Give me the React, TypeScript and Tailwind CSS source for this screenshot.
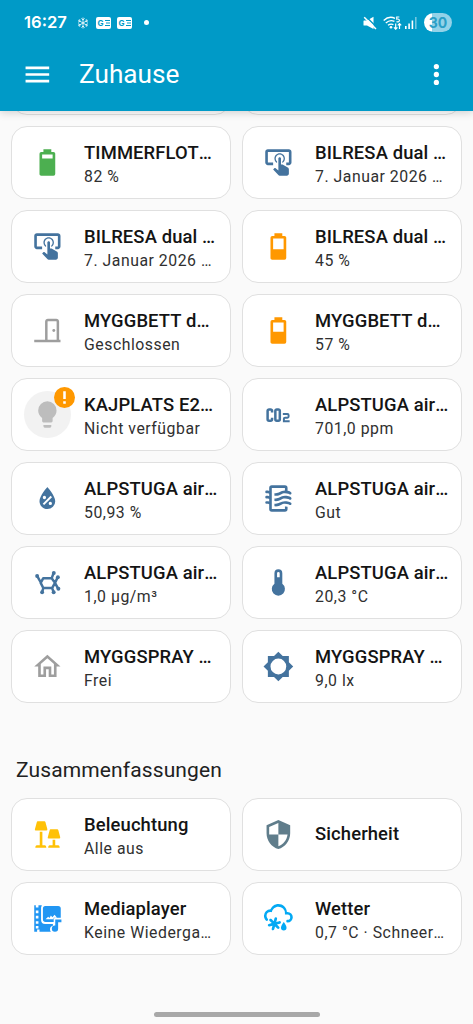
import type { ReactNode } from "react";

type Kachel = { titel: string; status?: string; icon: ReactNode; farbe: string; fehler?: boolean };

const BLAU = "text-[#44739e]";
const ORANGE = "text-[#ff9800]";
const GRAU = "text-[#9e9e9e]";

// 24er-Raster mit Rand, damit das Icon genau die runde Fläche füllt
function Icon({ d, children }: { d?: string; children?: ReactNode }) {
  return (
    <svg viewBox="-5.8 -5.9 35.8 35.8" className="w-[47px] h-[47px] shrink-0" fill="currentColor">
      {d && <path d={d} fillRule="evenodd" />}
      {children}
    </svg>
  );
}

const AKKU = "M16.67,4H15V2H9V4H7.33A1.33,1.33 0 0,0 6,5.33V20.67C6,21.4 6.6,22 7.33,22H16.67A1.33,1.33 0 0,0 18,20.67V5.33C18,4.6 17.4,4 16.67,4Z";
const akku80 = <Icon d={"M16,9H8V6H16Z" + AKKU} />;
const akku50 = <Icon d={"M16,13H8V6H16Z" + AKKU} />;
const akku40 = <Icon d={"M16,14H8V6H16Z" + AKKU} />;

const taste = (
  <Icon d="M13 5C15.21 5 17 6.79 17 9C17 10.5 16.2 11.77 15 12.46V11.24C15.61 10.69 16 9.89 16 9C16 7.34 14.66 6 13 6S10 7.34 10 9C10 9.89 10.39 10.69 11 11.24V12.46C9.8 11.77 9 10.5 9 9C9 6.79 10.79 5 13 5M20 20.5C19.97 21.32 19.32 21.97 18.5 22H13C12.62 22 12.26 21.85 12 21.57L8 17.37L8.74 16.6C8.93 16.39 9.2 16.28 9.5 16.28H9.7L12 18V9C12 8.45 12.45 8 13 8S14 8.45 14 9V13.47L15.21 13.6L19.15 15.79C19.68 16.03 20 16.56 20 17.14V20.5M20 2H4C2.9 2 2 2.9 2 4V12C2 13.11 2.9 14 4 14H8V12L4 12L4 4H20L20 12H18V14H20V13.97L20.04 14C21.13 14 22 13.09 22 12V4C22 2.9 21.11 2 20 2Z" />
);

const tuer = (
  <Icon>
    <path d="M2 20H22M11.2 20V5.2A1.2 1.2 0 0 1 12.4 4H18.8A1.2 1.2 0 0 1 20 5.2V20" fill="none" stroke="currentColor" strokeWidth="1.9" />
    <circle cx="16.9" cy="12" r="1.1" />
  </Icon>
);

const birne = (
  <Icon d="M12,2A7,7 0 0,0 5,9C5,11.38 6.19,13.47 8,14.74V17A1,1 0 0,0 9,18H15A1,1 0 0,0 16,17V14.74C17.81,13.47 19,11.38 19,9A7,7 0 0,0 12,2M9,21A1,1 0 0,0 10,22H14A1,1 0 0,0 15,21V20H9V21Z" />
);

const co2 = (
  <Icon>
    <path
      d="M7.2 10.4V9.2A1.1 1.1 0 0 0 6.1 8.1H4.9A1.1 1.1 0 0 0 3.8 9.2V15.6A1.1 1.1 0 0 0 4.9 16.7H6.1A1.1 1.1 0 0 0 7.2 15.6V14.4M10.8 8.1H12A1.1 1.1 0 0 1 13.1 9.2V15.6A1.1 1.1 0 0 1 12 16.7H10.8A1.1 1.1 0 0 1 9.7 15.6V9.2A1.1 1.1 0 0 1 10.8 8.1Z"
      fill="none"
      stroke="currentColor"
      strokeWidth="1.9"
    />
    <path d="M15.4 11.7H18.9A.9 .9 0 0 1 19.8 12.6V13.5A.9 .9 0 0 1 18.9 14.4H17.1A.9 .9 0 0 0 16.2 15.3V17.2H20.6" fill="none" stroke="currentColor" strokeWidth="1.5" />
  </Icon>
);

const feuchte = (
  <Icon d="M12,3.25C12,3.25 6,10 6,14C6,17.32 8.69,20 12,20A6,6 0 0,0 18,14C18,10 12,3.25 12,3.25M14.47,9.97L15.53,11.03L9.53,17.03L8.47,15.97M9.75,10A1.25,1.25 0 0,1 11,11.25A1.25,1.25 0 0,1 9.75,12.5A1.25,1.25 0 0,1 8.5,11.25A1.25,1.25 0 0,1 9.75,10M14.25,14.5A1.25,1.25 0 0,1 15.5,15.75A1.25,1.25 0 0,1 14.25,17A1.25,1.25 0 0,1 13,15.75A1.25,1.25 0 0,1 14.25,14.5Z" />
);

const luft = (
  <Icon d="M19,18.31V20A2,2 0 0,1 17,22H7A2,2 0 0,1 5,20V16.3C4.54,16.12 3.95,16 3,16A1,1 0 0,1 2,15A1,1 0 0,1 3,14C3.82,14 4.47,14.08 5,14.21V12.3C4.54,12.12 3.95,12 3,12A1,1 0 0,1 2,11A1,1 0 0,1 3,10C3.82,10 4.47,10.08 5,10.21V8.3C4.54,8.12 3.95,8 3,8A1,1 0 0,1 2,7A1,1 0 0,1 3,6C3.82,6 4.47,6.08 5,6.21V4A2,2 0 0,1 7,2H17A2,2 0 0,1 19,4V6.16C20.78,6.47 21.54,7.13 21.71,7.29C22.1,7.68 22.1,8.32 21.71,8.71C21.32,9.1 20.8,9.09 20.29,8.71V8.71C20.29,8.71 19.25,8 17,8C15.74,8 14.91,8.41 13.95,8.9C12.91,9.41 11.74,10 10,10C9.64,10 9.31,10 9,9.96V7.95C9.3,8 9.63,8 10,8C11.26,8 12.09,7.59 13.05,7.11C14.09,6.59 15.27,6 17,6V4H7V20H17V18C18.5,18 18.97,18.29 19,18.31M17,10C15.27,10 14.09,10.59 13.05,11.11C12.09,11.59 11.26,12 10,12C9.63,12 9.3,12 9,11.95V13.96C9.31,14 9.64,14 10,14C11.74,14 12.91,13.41 13.95,12.9C14.91,12.42 15.74,12 17,12C19.25,12 20.29,12.71 20.29,12.71V12.71C20.8,13.1 21.32,13.1 21.71,12.71C22.1,12.32 22.1,11.69 21.71,11.29C21.5,11.08 20.25,10 17,10M17,14C15.27,14 14.09,14.59 13.05,15.11C12.09,15.59 11.26,16 10,16C9.63,16 9.3,16 9,15.95V17.96C9.31,18 9.64,18 10,18C11.74,18 12.91,17.41 13.95,16.9C14.91,16.42 15.74,16 17,16C19.25,16 20.29,16.71 20.29,16.71V16.71C20.8,17.1 21.32,17.1 21.71,16.71C22.1,16.32 22.1,15.69 21.71,15.29C21.5,15.08 20.25,14 17,14Z" />
);

const feinstaub = (
  <Icon>
    <path d="M8.9 8.7H15.3L17.8 12.3L15.6 16.2H8.9L6.9 12.3ZM4.4 7.3L7 12M15.3 8.7L16.8 4.8M17.8 12.3L19.8 8.2M17.8 12.3L20.2 16.6M15.6 16.2L16.8 19.3M8.9 16.2L8 19.3" fill="none" stroke="currentColor" strokeWidth="1.9" strokeLinejoin="round" />
    <circle cx="4.2" cy="7.1" r="1.5" />
    <circle cx="16.9" cy="4.7" r="1.5" />
    <circle cx="20" cy="8" r="1.5" />
    <circle cx="20.4" cy="16.8" r="1.5" />
    <circle cx="16.8" cy="19.4" r="1.5" />
    <circle cx="8" cy="19.4" r="1.5" />
  </Icon>
);

const thermometer = <Icon d="M15 13V5A3 3 0 0 0 9 5V13A5 5 0 1 0 15 13M12 4A1 1 0 0 1 13 5V8H11V5A1 1 0 0 1 12 4Z" />;
const haus = <Icon d="M12 5.69L17 10.19V18H15V12H9V18H7V10.19L12 5.69M12 3L2 12H5V20H11V14H13V20H19V12H22" />;
const helligkeit = (
  <Icon d="M12,18A6,6 0 0,1 6,12A6,6 0 0,1 12,6A6,6 0 0,1 18,12A6,6 0 0,1 12,18M20,15.31L23.31,12L20,8.69V4H15.31L12,0.69L8.69,4H4V8.69L0.69,12L4,15.31V20H8.69L12,23.31L15.31,20H20V15.31Z" />
);

const lampen = (
  <Icon>
    <path d="M4.6 2H9.8Q10.3 2 10.5 2.5L12 8Q12.1 9 11.2 9H3.2Q2.2 9 2.5 8L4 2.5Q4.1 2 4.6 2ZM14.4 8H19.6Q20.1 8 20.3 8.5L21.8 14Q21.9 15 21 15H13Q12 15 12.3 14L13.8 8.5Q13.9 8 14.4 8Z" />
    <path d="M6.2 10H8.2V20.2H10.2Q11.2 20.3 11.2 22H2.8Q2.8 20.3 3.8 20.2H6.2ZM16 16H18V20.2H20.4Q21.4 20.3 21.4 22H12.6Q12.6 20.3 13.6 20.2H16Z" />
  </Icon>
);

const schild = <Icon d="M12,12H19C18.47,16.11 15.72,19.78 12,20.92V12H5V6.3L12,3.19M12,1L3,5V11C3,16.55 6.84,21.73 12,23C17.16,21.73 21,16.55 21,11V5L12,1Z" />;

// Filmstreifen, Bild und Note
const medien = (
  <Icon>
    <path
      fillRule="evenodd"
      d="M2 2H3.2V3.6H5.2V2H7.8L7.2 3.6V13Q7.2 16.2 10.3 16.2H16.2V17.6Q14 18.3 14 20.3Q14 21.4 14.7 22H6V20.4H4.2V22H2ZM3.2 6V8H5.2V6ZM3.2 10V12H5.2V10ZM3.2 14V16H5.2V14ZM3.2 17.8V19.6H5.2V17.8Z"
    />
    <path d="M10.4 2.4H20.2Q22.2 2.4 22.2 4.4V11.4H16.8V14.6H10.6Q8.6 14.6 8.6 12.6V4.4Q8.6 2.4 10.4 2.4ZM10.6 12.6H16.5V12L19.2 11.3L17.5 9.2L15.8 11L14.7 9.8L13.6 11.6L12.6 10.6Z" fillRule="evenodd" />
    <path d="M18 12.8H22.7V14.8H20.2V19.6A2.4 2.4 0 1 1 18 17.3Z" />
  </Icon>
);

const wetter = (
  <Icon>
    <path d="M4,16.36C3.86,15.82 4.18,15.25 4.73,15.11L7,14.5L5.33,12.86C4.93,12.46 4.93,11.81 5.33,11.4C5.73,11 6.4,11 6.79,11.4L8.45,13.05L9.04,10.8C9.18,10.24 9.75,9.92 10.29,10.07C10.85,10.21 11.17,10.78 11,11.33L10.42,13.58L12.67,13C13.22,12.83 13.79,13.15 13.93,13.71C14.08,14.25 13.76,14.82 13.2,14.96L10.95,15.55L12.6,17.21C13,17.6 13,18.27 12.6,18.67C12.2,19.07 11.54,19.07 11.15,18.67L9.5,17L8.89,19.27C8.75,19.83 8.18,20.14 7.64,20C7.08,19.86 6.77,19.29 6.91,18.74L7.5,16.5L5.26,17.09C4.71,17.23 4.14,16.92 4,16.36Z" transform="translate(0 1)" />
    <path d="M1,10A5,5 0 0,1 6,5C7,2.65 9.3,1 12,1C15.43,1 18.24,3.66 18.5,7.03L19,7A4,4 0 0,1 23,11A4,4 0 0,1 19,15A1,1 0 0,1 18,14A1,1 0 0,1 19,13A2,2 0 0,0 21,11A2,2 0 0,0 19,9H17V8A5,5 0 0,0 12,3C9.5,3 7.45,4.82 7.06,7.19C6.73,7.07 6.37,7 6,7A3,3 0 0,0 3,10C3,10.85 3.35,11.61 3.91,12.16C4.27,12.55 4.26,13.16 3.88,13.54C3.5,13.93 2.85,13.93 2.47,13.54C1.56,12.63 1,11.38 1,10Z" />
    <path d="M16.1 14.7C16.1 14.7 18.2 17.3 18.2 19A2.1 2.1 0 0 1 14 19C14 17.3 16.1 14.7 16.1 14.7Z" />
  </Icon>
);

const GERAETE: Kachel[] = [
  { titel: "TIMMERFLOT…", status: "82 %", icon: akku80, farbe: "text-[#4caf50]" },
  { titel: "BILRESA dual …", status: "7. Januar 2026 …", icon: taste, farbe: BLAU },
  { titel: "BILRESA dual …", status: "7. Januar 2026 …", icon: taste, farbe: BLAU },
  { titel: "BILRESA dual …", status: "45 %", icon: akku40, farbe: ORANGE },
  { titel: "MYGGBETT d…", status: "Geschlossen", icon: tuer, farbe: GRAU },
  { titel: "MYGGBETT d…", status: "57 %", icon: akku50, farbe: ORANGE },
  { titel: "KAJPLATS E2…", status: "Nicht verfügbar", icon: birne, farbe: "text-[#bdbdbd]", fehler: true },
  { titel: "ALPSTUGA air…", status: "701,0 ppm", icon: co2, farbe: BLAU },
  { titel: "ALPSTUGA air…", status: "50,93 %", icon: feuchte, farbe: BLAU },
  { titel: "ALPSTUGA air…", status: "Gut", icon: luft, farbe: BLAU },
  { titel: "ALPSTUGA air…", status: "1,0 μg/m³", icon: feinstaub, farbe: BLAU },
  { titel: "ALPSTUGA air…", status: "20,3 °C", icon: thermometer, farbe: BLAU },
  { titel: "MYGGSPRAY …", status: "Frei", icon: haus, farbe: GRAU },
  { titel: "MYGGSPRAY …", status: "9,0 lx", icon: helligkeit, farbe: BLAU },
];

const ZUSAMMENFASSUNGEN: Kachel[] = [
  { titel: "Beleuchtung", status: "Alle aus", icon: lampen, farbe: "text-[#ffc107]" },
  { titel: "Sicherheit", icon: schild, farbe: "text-[#607d8b]" },
  { titel: "Mediaplayer", status: "Keine Wiederga…", icon: medien, farbe: "text-[#2196f3]" },
  { titel: "Wetter", status: "0,7 °C · Schneer…", icon: wetter, farbe: "text-[#03a9f4]" },
];

// Auslassungspunkte ohne Kerning zum letzten Buchstaben
function Text({ t }: { t: string }) {
  if (!t.endsWith("…")) return <>{t}</>;
  return <>{t.slice(0, -1)}<span className="inline-block">…</span></>;
}

function Karte({ k }: { k: Kachel }) {
  return (
    <div className="h-[73px] min-w-0 flex items-center gap-[13px] pl-[12px] pr-[8px] bg-white border border-[#e0e0e0] rounded-[16px]">
      <div className={`relative w-[47px] h-[47px] shrink-0 rounded-full ${k.farbe} ${k.fehler ? "bg-[#f2f2f2]" : ""}`}>
        {k.icon}
        {k.fehler && (
          <span className="absolute -top-[4px] -right-[4px] w-[21px] h-[21px] rounded-full bg-[#ff9800] flex items-center justify-center">
            <svg viewBox="0 0 24 24" className="w-[17px] h-[17px]" fill="#fff">
              <path d="M10.2 3H13.8V14H10.2ZM10.2 17.2H13.8V20.8H10.2Z" />
            </svg>
          </span>
        )}
      </div>
      <div className={`min-w-0 flex-1 whitespace-nowrap ${k.status ? "pt-[2px]" : "pb-[1px]"}`}>
        <div className="h-[26px] text-[18.4px] leading-[26px] font-medium tracking-[0.13px] text-[#141414]"><Text t={k.titel} /></div>
        {k.status && <div className="h-[21px] text-[15.8px] leading-[21px] tracking-[0.53px] text-[#303030]"><Text t={k.status} /></div>}
      </div>
    </div>
  );
}

function Statusleiste() {
  return (
    <div className="h-[38px] pt-[7px] pl-[24px] pr-[21px] flex items-center text-white">
      <span className="w-[53px] text-[16.6px] font-semibold font-['Inter',sans-serif]">16:27</span>
      <svg viewBox="0 0 12 12" className="w-[12px] h-[12px]" fill="none" stroke="currentColor" strokeWidth="0.8">
        <path d="M6 0.5V11.5M1.2 3.2L10.8 8.8M10.8 3.2L1.2 8.8M4.4 1.4L6 3L7.6 1.4M4.4 10.6L6 9L7.6 10.6M1 5.2L3 4.4L2.7 2.2M11 5.2L9 4.4L9.3 2.2M1 6.8L3 7.6L2.7 9.8M11 6.8L9 7.6L9.3 9.8" />
      </svg>
      {[0, 1].map((i) => (
        <span key={i} className={`${i ? "ml-[6px]" : "ml-[7px]"} w-[15px] h-[12px] rounded-[2px] bg-white flex items-center justify-center gap-[1px]`}>
          <span className="text-[8px] leading-none font-bold text-[#009ac7] font-['Inter',sans-serif]">G</span>
          <svg viewBox="0 0 5 6" className="w-[5px] h-[6px]" stroke="#009ac7" strokeWidth="1">
            <path d="M0 .5H5M1 3H5M0 5.5H5" />
          </svg>
        </span>
      ))}
      <span className="ml-[12px] w-[5px] h-[5px] rounded-full bg-white" />
      <div className="flex-1" />
      <svg viewBox="0 0 14 14" className="w-[14px] h-[14px]" fill="currentColor">
        <path d="M1 4.5H4L10.5 0.8V13L4 9.5H1Q.5 9.5 .5 9V5Q.5 4.5 1 4.5Z" />
        <path d="M2.4 0L14 11.6" stroke="#009ac7" strokeWidth="1.4" />
        <path d="M1.2 1.2L13 13" stroke="currentColor" strokeWidth="1.5" />
      </svg>
      <svg viewBox="0 0 19 14" className="ml-[6px] w-[19px] h-[14px]" fill="none" stroke="currentColor" strokeWidth="1.4">
        <path d="M.7 4.5Q6 -.5 12 2.4M2.8 7Q7 3.2 11.4 5.4M5 9.3Q7.6 7.4 10.4 8.6" />
        <circle cx="8" cy="11.3" r="1.3" fill="currentColor" stroke="none" />
        <path d="M16.3 1H13.7V3.1Q16.4 2.7 16.4 4.4Q16.3 6.3 13.4 5.8" strokeWidth="1.1" />
        <path d="M12.7 7.5V13M11 11.4L12.7 13.2L14.4 11.4M16.5 13V8M14.8 9.4L16.5 7.6L18.2 9.4" strokeWidth="1.2" />
      </svg>
      <svg viewBox="0 0 12 12" className="ml-[3px] w-[12px] h-[12px]" fill="currentColor">
        <path d="M0 9H1.6V12H0ZM3.3 6.5H4.9V12H3.3ZM6.6 3.5H8.2V12H6.6Z" />
        <path d="M10 0H11.6V12H10Z" opacity=".45" />
      </svg>
      <span className="ml-[7px] w-[28px] h-[19px] rounded-full bg-linear-to-r from-white from-30% to-[#93d2e8] to-30% flex items-center justify-center text-[14px] leading-none font-bold text-[#2b9fc6] font-['Inter',sans-serif]">
        30
      </span>
    </div>
  );
}

export default function App() {
  return (
    <div className="w-[473px] h-[1024px] overflow-hidden flex flex-col bg-[#fafafa] text-[#141414] font-['Roboto',sans-serif]">
      <header className="relative z-10 h-[110.5px] shrink-0 bg-[#009ac7] shadow-[0_2px_8px_rgba(0,0,0,0.16)]">
        <Statusleiste />
        <div className="h-[72px] pl-[14px] pr-[13px] flex items-center text-white">
          <Icon d="M3,6H21V8H3V6M3,11H21V13H3V11M3,16H21V18H3V16Z" />
          <h1 className="pt-[1px] ml-[18px] flex-1 text-[26.2px] font-normal">Zuhause</h1>
          <Icon d="M12,16A2,2 0 0,1 14,18A2,2 0 0,1 12,20A2,2 0 0,1 10,18A2,2 0 0,1 12,16M12,10A2,2 0 0,1 14,12A2,2 0 0,1 12,14A2,2 0 0,1 10,12A2,2 0 0,1 12,10M12,4A2,2 0 0,1 14,6A2,2 0 0,1 12,8A2,2 0 0,1 10,6A2,2 0 0,1 12,4Z" />
        </div>
      </header>

      <main className="px-[11px] flex-1 flex flex-col">
        {/* unterer Rand der weggescrollten Reihe */}
        <div className="h-[4.5px] shrink-0 overflow-hidden flex flex-col justify-end">
          <div className="grid grid-cols-2 gap-[11px]">
            <div className="h-[73px] bg-white border border-[#e0e0e0] rounded-[16px]" />
            <div className="h-[73px] bg-white border border-[#e0e0e0] rounded-[16px]" />
          </div>
        </div>
        <div className="mt-[11px] grid grid-cols-2 gap-[11px]">
          {GERAETE.map((k, i) => <Karte key={i} k={k} />)}
        </div>
        <h2 className="mt-[53px] h-[28px] ml-[5px] text-[21px] leading-[28px] tracking-[0.12px] font-normal text-[#212121]">Zusammenfassungen</h2>
        <div className="mt-[14px] grid grid-cols-2 gap-[11px]">
          {ZUSAMMENFASSUNGEN.map((k) => <Karte key={k.titel} k={k} />)}
        </div>
        <div className="flex-1" />
        <div className="mb-[7px] self-center w-[166px] h-[5px] rounded-full bg-[#a8a8a8]" />
      </main>
    </div>
  );
}
